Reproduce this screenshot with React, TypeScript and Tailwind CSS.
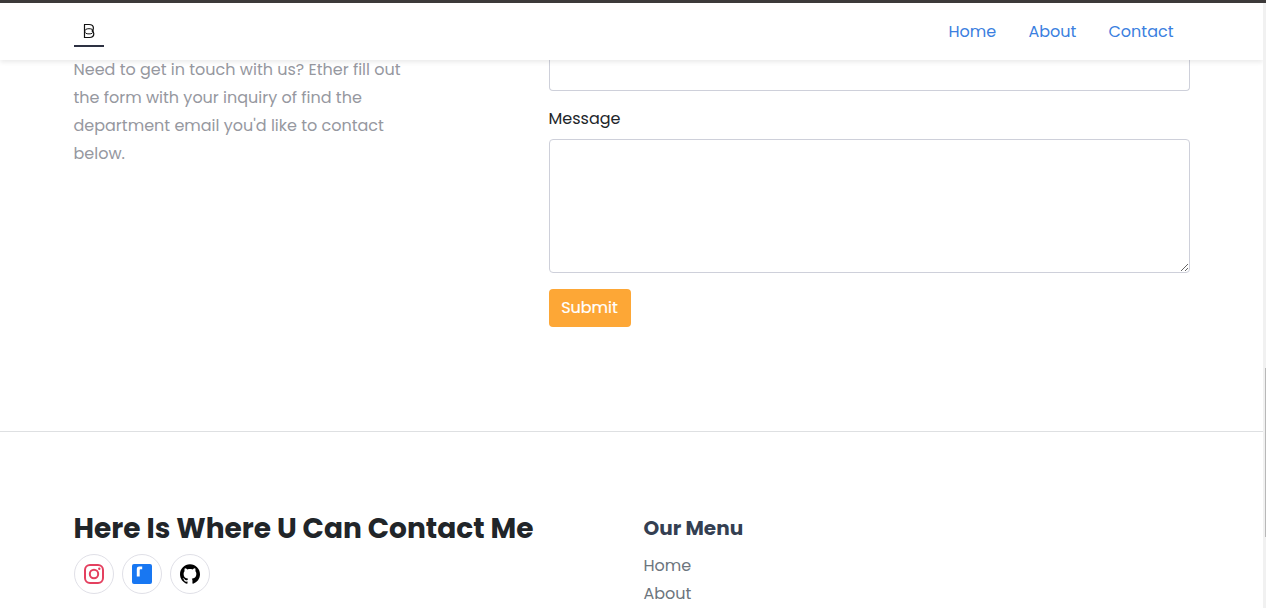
import React from "react";

const introLines = [
  "Need to get in touch with us? Ether fill out",
  "the form with your inquiry of find the",
  "department email you'd like to contact",
  "below.",
];

function Logo() {
  return (
    <a href="#" aria-label="Home" className="mt-[15px] flex h-[29px] w-[30px] flex-col items-center justify-between border-b-2 border-[#2d3142]">
      <svg width="30" height="26" viewBox="0 0 30 26" className="shrink-0" fill="none" stroke="#111" strokeWidth="1.2">
        <path d="M10 6.5H15C17.8 6.5 19.4 8 19.4 10.1C19.4 11.4 18.9 12.4 18.2 13C19.2 13.6 19.8 14.6 19.8 15.8C19.8 18 18.1 19.5 15.5 19.5H10.5V6.5" />
        <ellipse cx="15" cy="13.3" rx="4.2" ry="2.6" strokeWidth="1" />
      </svg>
    </a>
  );
}

function Header() {
  return (
    <header className="relative z-10 flex h-[57px] shrink-0 items-start justify-between bg-white pl-[74px] pr-[88.5px] shadow-[0_2px_5px_rgba(0,0,0,0.09)]">
      <Logo />
      <nav className="flex gap-8 pt-[17px] text-base leading-6 text-[#3b7fe0]">
        <a href="#" className="w-12 whitespace-nowrap">Home</a>
        <a href="#" className="w-12 whitespace-nowrap">About</a>
        <a href="#" className="w-[66px] whitespace-nowrap">Contact</a>
      </nav>
    </header>
  );
}

function ContactSection() {
  return (
    <section className="flex h-[372px] shrink-0 border-b border-[#dee0e2]">
      <p className="w-[548px] shrink-0 pl-[73.5px] text-base leading-7 text-[#96989f]">
        <span className="-mt-1 block">
          {introLines.map((line) => (
            <span key={line} className="block whitespace-nowrap">{line}</span>
          ))}
        </span>
      </p>
      <form className="ml-px flex w-[641px] flex-col items-start">
        <div className="h-[31px] w-full rounded-b border border-t-0 border-[#ced0da]" />
        <label htmlFor="message" className="-ml-[0.5px] mt-4 text-base leading-6 text-[#212529]">Message</label>
        <textarea id="message" className="mt-2 block h-[134px] w-full resize rounded border border-[#ced0da] bg-white" />
        <button type="button" className="mt-4 h-[38px] w-[82px] rounded bg-[#fda736] pr-px text-base text-white [-webkit-text-stroke:0.2px_white]">Submit</button>
      </form>
    </section>
  );
}

function Socials() {
  const circle = "flex size-10 items-center justify-center rounded-full border border-[#e0e0e7]";
  return (
    <div className="mt-[9px] flex gap-2">
      <a href="#" aria-label="Instagram" className={circle}>
        <svg width="20" height="20" viewBox="0 0 20 20" fill="none" stroke="#e4405f">
          <rect x="1" y="1" width="18" height="18" rx="5" strokeWidth="2" />
          <circle cx="10" cy="10" r="4.2" strokeWidth="2" />
          <circle cx="15.3" cy="4.7" r="1.2" fill="#e4405f" stroke="none" />
        </svg>
      </a>
      <a href="#" aria-label="Facebook" className={circle}>
        <svg width="20" height="20" viewBox="0 0 20 20">
          <rect width="20" height="20" rx="2" fill="#1877f2" />
          <path d="M4.8 12.4V4.8Q4.8 2.5 7.2 2.5H10.2V5.2H8.4Q7.7 5.2 7.7 6V12.4Z" fill="#fff" />
        </svg>
      </a>
      <a href="#" aria-label="GitHub" className={circle}>
        <svg width="20" height="20" viewBox="0 0 24 24" fill="#000">
          <path d="M12 .297c-6.63 0-12 5.373-12 12 0 5.303 3.438 9.8 8.205 11.385.6.113.82-.258.82-.577 0-.285-.01-1.04-.015-2.04-3.338.724-4.042-1.61-4.042-1.61C4.422 18.07 3.633 17.7 3.633 17.7c-1.087-.744.084-.729.084-.729 1.205.084 1.838 1.236 1.838 1.236 1.07 1.835 2.809 1.305 3.495.998.108-.776.417-1.305.76-1.605-2.665-.3-5.466-1.332-5.466-5.93 0-1.31.465-2.38 1.235-3.22-.135-.303-.54-1.523.105-3.176 0 0 1.005-.322 3.3 1.23.96-.267 1.98-.399 3-.405 1.02.006 2.04.138 3 .405 2.28-1.552 3.285-1.23 3.285-1.23.645 1.653.24 2.873.12 3.176.765.84 1.23 1.91 1.23 3.22 0 4.61-2.805 5.625-5.475 5.92.42.36.81 1.096.81 2.22 0 1.606-.015 2.896-.015 3.286 0 .315.21.69.825.57C20.565 22.092 24 17.592 24 12.297c0-6.627-5.373-12-12-12" />
        </svg>
      </a>
    </div>
  );
}

function Footer() {
  return (
    <footer className="flex grow pl-[74px] pt-20">
      <div className="w-[569.5px]">
        <h2 className="-ml-[0.5px] mt-px whitespace-nowrap text-[28px] font-bold leading-8 text-[#212529]">Here Is Where U Can Contact Me</h2>
        <Socials />
      </div>
      <div className="flex flex-col text-base leading-7 text-[#6c757d]">
        <h3 className="mb-2 whitespace-nowrap text-xl font-bold leading-8 text-[#343f52]">Our Menu</h3>
        <a href="#">Home</a>
        <a href="#">About</a>
      </div>
    </footer>
  );
}

export default function App() {
  return (
    <div className="flex h-[608px] w-[1266px] flex-col overflow-hidden border-t-[3px] border-[#3c3a3a] bg-white font-['Poppins','Inter',sans-serif]">
      <div className="flex min-h-0 grow">
        <main className="flex w-[1263px] flex-col overflow-hidden">
          <Header />
          <ContactSection />
          <Footer />
        </main>
        <div className="w-[3px] bg-[#f1f1f1] pl-0.5 pt-[365px]">
          <div className="h-[169px] w-px bg-[#b8b8b8]" />
        </div>
      </div>
    </div>
  );
}
